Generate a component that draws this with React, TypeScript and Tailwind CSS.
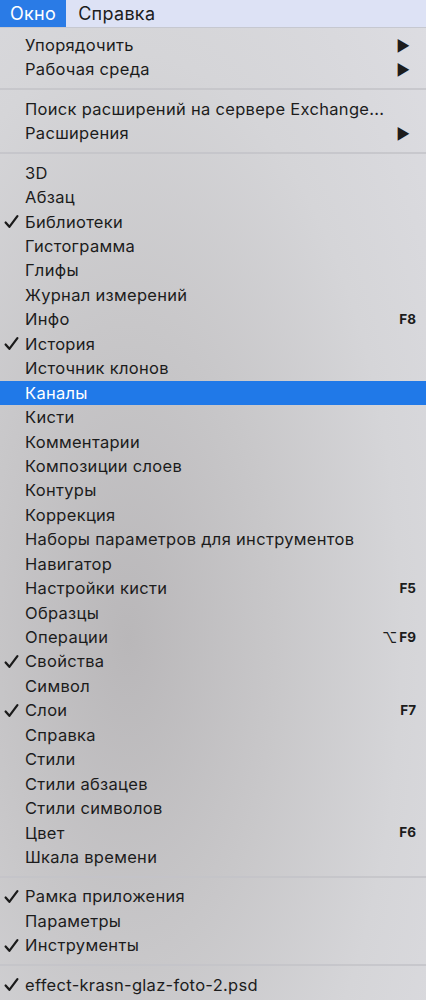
import React from 'react'

type Item = {
  label: string
  checked?: boolean
  submenu?: boolean
  shortcut?: string
  option?: boolean
  active?: boolean
}

const groups: Item[][] = [
  [
    { label: 'Упорядочить', submenu: true },
    { label: 'Рабочая среда', submenu: true },
  ],
  [
    { label: 'Поиск расширений на сервере Exchange...' },
    { label: 'Расширения', submenu: true },
  ],
  [
    { label: '3D' },
    { label: 'Абзац' },
    { label: 'Библиотеки', checked: true },
    { label: 'Гистограмма' },
    { label: 'Глифы' },
    { label: 'Журнал измерений' },
    { label: 'Инфо', shortcut: 'F8' },
    { label: 'История', checked: true },
    { label: 'Источник клонов' },
    { label: 'Каналы', active: true },
    { label: 'Кисти' },
    { label: 'Комментарии' },
    { label: 'Композиции слоев' },
    { label: 'Контуры' },
    { label: 'Коррекция' },
    { label: 'Наборы параметров для инструментов' },
    { label: 'Навигатор' },
    { label: 'Настройки кисти', shortcut: 'F5' },
    { label: 'Образцы' },
    { label: 'Операции', shortcut: 'F9', option: true },
    { label: 'Свойства', checked: true },
    { label: 'Символ' },
    { label: 'Слои', checked: true, shortcut: 'F7' },
    { label: 'Справка' },
    { label: 'Стили' },
    { label: 'Стили абзацев' },
    { label: 'Стили символов' },
    { label: 'Цвет', shortcut: 'F6' },
    { label: 'Шкала времени' },
  ],
  [
    { label: 'Рамка приложения', checked: true },
    { label: 'Параметры' },
    { label: 'Инструменты', checked: true },
  ],
  [{ label: 'effect-krasn-glaz-foto-2.psd', checked: true }],
]

function Check({ light }: { light?: boolean }) {
  return (
    <svg width="15" height="15" viewBox="0 0 14 14" className="absolute left-[4px] top-1/2 -translate-y-1/2">
      <path
        d="M1.5 7.5 L5 11.5 L12.5 1.5"
        fill="none"
        stroke={light ? '#fff' : '#1b1b1b'}
        strokeWidth="2.1"
        strokeLinecap="round"
        strokeLinejoin="round"
      />
    </svg>
  )
}

function Row({ item }: { item: Item }) {
  const active = item.active
  return (
    <div
      className={`relative flex items-center h-[24.45px] pl-[25px] pr-[10px] ${
        active ? 'bg-[#2079e8] text-white' : 'text-[#1c1c1c]'
      }`}
    >
      {item.checked && <Check light={active} />}
      <span className="flex-1 text-[16.5px] leading-none whitespace-nowrap tracking-[0.3px]">{item.label}</span>
      {item.submenu && <span className="text-[15px] leading-none mr-[6px] text-[#1c1c1c]">▶</span>}
      {item.shortcut && (
        <span className="flex items-center gap-[2px] text-[13.5px] font-bold leading-none">
          {item.option && <span className="text-[15px] font-normal">⌥</span>}
          {item.shortcut}
        </span>
      )}
    </div>
  )
}

export default function App() {
  return (
    <div
      className="w-[426px] h-[1000px] overflow-hidden bg-[radial-gradient(ellipse_at_30%_64%,#b9b7b9_0%,#c8c7c9_35%,#d5d5d8_65%,#dddde2_100%)]"
      style={{ fontFamily: 'Inter, "Liberation Sans", Arial, sans-serif' }}
    >
      {/* menu bar */}
      <div className="flex h-[28px] bg-[#dde2f5] border-b border-[#c6c8d0] text-[18px] leading-none tracking-[0.3px]">
        <div className="flex items-center px-[10px] bg-[#2a7be6] text-white">Окно</div>
        <div className="flex items-center px-[12px] text-[#1c1c1c]">Справка</div>
      </div>

      <div className="pt-[5px]">
        {groups.map((g, gi) => (
          <div key={gi}>
            {gi > 0 && (
              <div className="h-[15px] flex items-center">
                <div className="w-full h-[2px] bg-[#c3c3c8]/80" />
              </div>
            )}
            {g.map((it) => (
              <Row key={it.label} item={it} />
            ))}
          </div>
        ))}
      </div>
    </div>
  )
}
